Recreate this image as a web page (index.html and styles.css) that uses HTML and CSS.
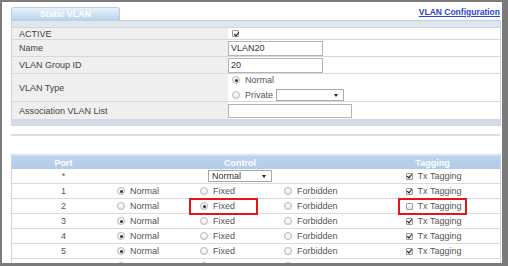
FILE: index.html
```html
<!DOCTYPE html>
<html>
<head>
<meta charset="utf-8">
<link rel="stylesheet" href="styles.css">
</head>
<body>
<div class="frame">
  <div class="topbar">
    <div class="tab">Static VLAN</div>
    <a class="cfg-link" href="#">VLAN Configuration</a>
  </div>
  <div class="t1">
    <div class="t1-head"></div>
    <div class="row h12"><div class="lab">ACTIVE</div><div class="val"><span class="cb on"></span></div></div>
    <div class="row h17"><div class="lab">Name</div><div class="val"><span class="inp w95">VLAN20</span></div></div>
    <div class="row h17"><div class="lab">VLAN Group ID</div><div class="val"><span class="inp w95">20</span></div></div>
    <div class="row h28"><div class="lab">VLAN Type</div>
      <div class="val stack">
        <div class="opt"><span class="rd on"></span><span class="otx">Normal</span></div>
        <div class="opt"><span class="rd"></span><span class="otx">Private</span><span class="sel w68"><span class="arr"></span></span></div>
      </div>
    </div>
    <div class="row h18"><div class="lab">Association VLAN List</div><div class="val"><span class="inp w124 h14"></span></div></div>
    <div class="t1-foot"></div>
  </div>
  <div class="sep"></div>
  <div class="t2">
    <div class="t2-head">
      <div class="c-port">Port</div>
      <div class="c-ctrl">Control</div>
      <div class="c-tag">Tagging</div>
    </div>
    <div class="r2">
      <div class="c-port">*</div>
      <div class="c-ctrl"><span class="sel w64">Normal<span class="arr"></span></span></div>
      <div class="c-tag"><span class="cb on"></span><span class="otx">Tx Tagging</span></div>
    </div>
    <div class="r2">
      <div class="c-port">1</div>
      <div class="c-n"><span class="rd on"></span><span class="otx">Normal</span></div>
      <div class="c-n"><span class="rd"></span><span class="otx">Fixed</span></div>
      <div class="c-n"><span class="rd"></span><span class="otx">Forbidden</span></div>
      <div class="c-tag"><span class="cb on"></span><span class="otx">Tx Tagging</span></div>
    </div>
    <div class="r2">
      <div class="c-port">2</div>
      <div class="c-n"><span class="rd"></span><span class="otx">Normal</span></div>
      <div class="c-n"><span class="rd on"></span><span class="otx">Fixed</span></div>
      <div class="c-n"><span class="rd"></span><span class="otx">Forbidden</span></div>
      <div class="c-tag"><span class="cb"></span><span class="otx">Tx Tagging</span></div>
    </div>
    <div class="r2">
      <div class="c-port">3</div>
      <div class="c-n"><span class="rd on"></span><span class="otx">Normal</span></div>
      <div class="c-n"><span class="rd"></span><span class="otx">Fixed</span></div>
      <div class="c-n"><span class="rd"></span><span class="otx">Forbidden</span></div>
      <div class="c-tag"><span class="cb on"></span><span class="otx">Tx Tagging</span></div>
    </div>
    <div class="r2">
      <div class="c-port">4</div>
      <div class="c-n"><span class="rd on"></span><span class="otx">Normal</span></div>
      <div class="c-n"><span class="rd"></span><span class="otx">Fixed</span></div>
      <div class="c-n"><span class="rd"></span><span class="otx">Forbidden</span></div>
      <div class="c-tag"><span class="cb on"></span><span class="otx">Tx Tagging</span></div>
    </div>
    <div class="r2">
      <div class="c-port">5</div>
      <div class="c-n"><span class="rd on"></span><span class="otx">Normal</span></div>
      <div class="c-n"><span class="rd"></span><span class="otx">Fixed</span></div>
      <div class="c-n"><span class="rd"></span><span class="otx">Forbidden</span></div>
      <div class="c-tag"><span class="cb on"></span><span class="otx">Tx Tagging</span></div>
    </div>
    <div class="r2 partial">
      <div class="c-port"></div>
      <div class="c-n"><span class="rd on"></span></div>
      <div class="c-n"><span class="rd"></span></div>
      <div class="c-n"><span class="rd"></span></div>
      <div class="c-tag"><span class="cb on"></span><span class="spacer"></span></div>
    </div>
    <div class="mark mark-fixed"></div>
    <div class="mark mark-tag"></div>
  </div>
</div>
</body>
</html>
```

FILE: styles.css
```css
* { box-sizing: border-box; }
html, body { margin: 0; padding: 0; background: #fff; }
body { font-family: "Liberation Sans", Arial, sans-serif; font-size: 9px; color: #444; }

.frame {
  position: relative;
  width: 508px;
  height: 266px;
  overflow: hidden;
  border-style: solid;
  border-color: #7b7b7b;
  border-width: 2px 6px 3px 2px;
  padding: 0 1px 0 9px;
  background: #fff;
}

.topbar { height: 18px; display: flex; justify-content: space-between; align-items: flex-end; }
.tab {
  width: 109px; height: 13px;
  border: 1px solid #b9cde3; border-bottom: none;
  border-radius: 3px 3px 0 0;
  background: linear-gradient(#e9f2fb, #b9d3ee);
  color: #fff; font-weight: bold; font-size: 9px;
  display: flex; align-items: center; justify-content: center;
}
.cfg-link { color: #1e48d6; font-weight: bold; font-size: 8.5px; text-decoration: underline; margin-bottom: 3px; margin-right: 1px; }

.t1 { border-left: 1px solid #cbd3dd; border-right: 1px solid #cbd3dd; }
.t1-head { height: 8px; border-top: 1px solid #c3cedb; background: #dfe6ee; border-bottom: 1px solid #cfd7e1; }
.row { display: flex; border-bottom: 1px solid #d3d9e1; }
.h12 { height: 12px; } .h17 { height: 17px; } .h28 { height: 28px; } .h18 { height: 18px; }
.lab { width: 216px; background: #efefef; padding-left: 7px; display: flex; align-items: center; }
.val { flex: 1; display: flex; align-items: center; background: #fff; }
.h12 .val { padding-left: 4px; }
.stack { flex-direction: column; align-items: flex-start; justify-content: center; padding-left: 4px; gap: 2px; }
.opt { display: flex; align-items: center; height: 13px; }
.t1-foot { height: 6px; background: #d3dce6; }

.inp { display: flex; align-items: center; height: 15px; border: 1px solid #b3b3b3; background: #fff; padding-left: 2px; color: #333; }
.w95 { width: 95px; } .w124 { width: 124px; } .inp.h14 { height: 14px; }

.sel { position: relative; display: inline-flex; align-items: center; height: 12px; border: 1px solid #a8a8a8; background: #fff; padding-left: 3px; color: #333; }
.w68 { width: 68px; height: 12px; margin-left: 3px; }
.w64 { width: 64px; }
.arr { position: absolute; right: 5px; top: 4px; width: 0; height: 0; border-left: 2.5px solid transparent; border-right: 2.5px solid transparent; border-top: 3px solid #222; }

.rd { display: inline-block; width: 8px; height: 8px; border-radius: 50%; border: 1px solid #b9b9b9; background: radial-gradient(circle at 50% 35%, #fff, #e2e2e2); position: relative; flex: none; }
.rd.on::after { content: ""; position: absolute; left: 1.5px; top: 1.5px; width: 3px; height: 3px; border-radius: 50%; background: #333; }
.otx { margin-left: 5px; color: #555; }

.cb { display: inline-block; width: 7px; height: 7px; border: 1px solid #9a9a9a; background: linear-gradient(#fff, #e4e4e4); position: relative; flex: none; border-radius: 1px; }
.cb.on::after { content: ""; position: absolute; left: 1.5px; top: -0.5px; width: 2px; height: 4px; border: solid #222; border-width: 0 1.5px 1.5px 0; transform: rotate(40deg); }
.spacer { display: inline-block; width: 48px; }

.sep { height: 2px; background: #dcdcdc; margin-top: 8px; margin-right: 1px; }

.t2 { position: relative; margin-top: 18px; border-left: 1px solid #cbd3dd; border-right: 1px solid #cbd3dd; }
.t2-head {
  display: grid; grid-template-columns: 103px 250px 1fr; height: 15px;
  border-top: 2px solid #d7e3f1;
  background: linear-gradient(#bcd3ee, #b2cbea);
  color: #fff; font-weight: bold;
}
.t2-head > div { display: flex; align-items: center; justify-content: center; }
.r2 { display: grid; grid-template-columns: 103px 83px 84px 83px 1fr; height: 15px; border-bottom: 1px solid #d6dbe2; }
.r2 > div { display: flex; align-items: center; }
.r2 .c-port { justify-content: center; color: #555; }
.r2 .c-ctrl { grid-column: 2 / 5; justify-content: center; }
.r2 .c-n { padding-left: 2px; }
.r2 .c-tag { justify-content: center; padding-left: 2px; }

.mark { position: absolute; border: 2px solid #e5141b; }
.mark-fixed { left: 177px; top: 44px; width: 69px; height: 17px; }
.mark-tag { left: 386px; top: 44px; width: 69px; height: 17px; }
```
